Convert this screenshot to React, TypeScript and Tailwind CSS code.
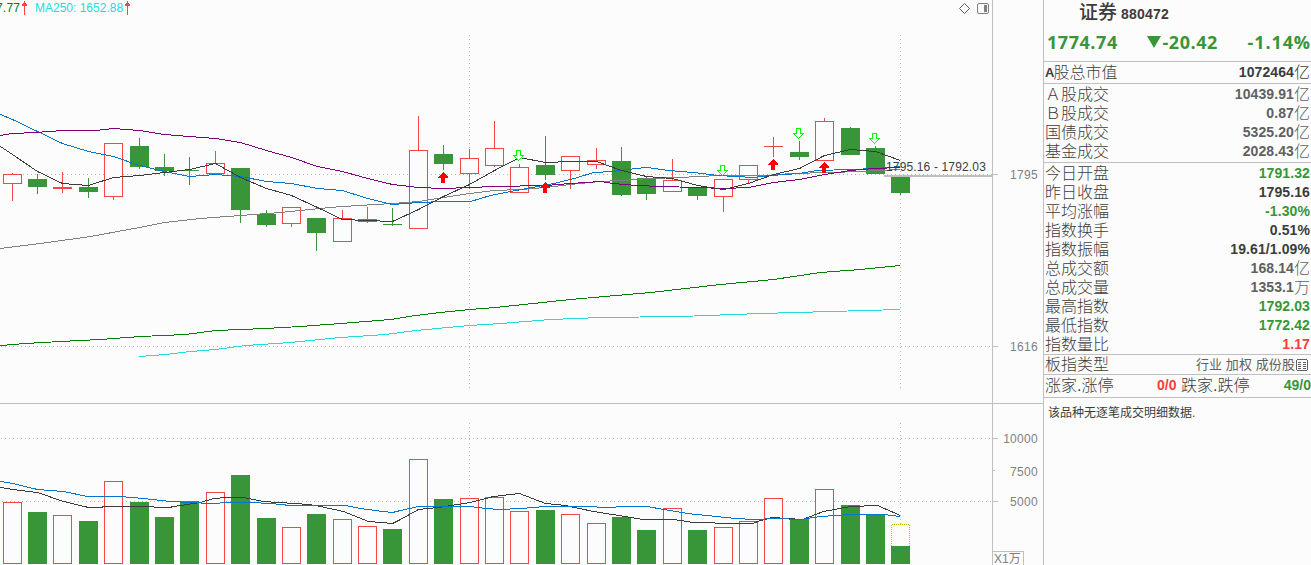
type Candle = {
  x: number;
  up: boolean;
  top: number;
  bottom: number;
  high: number;
  low: number;
  vol: number;
};

const RED = '#f84444';
const GREEN = '#389638';
const GRID = '#c0c0c0';
const BG = '#fcfcfc';

//x, up, body top, body bottom, high, low, volume top
const rows: [number, number, number, number, number, number, number][] = [
  [3, 1, 174, 184, 173, 201, 502],
  [28, 0, 179, 187, 174, 194, 512],
  [53, 1, 187, 189, 172, 193, 515],
  [79, 0, 187, 192, 178, 198, 521],
  [104, 1, 143, 197, 143, 200, 481],
  [130, 0, 146, 167, 138, 169, 502],
  [155, 0, 167, 171, 154, 176, 517],
  [180, 0, 170, 171, 157, 185, 501],
  [206, 1, 163, 174, 151, 174, 492],
  [231, 0, 168, 210, 168, 223, 475],
  [257, 0, 214, 225, 210, 227, 518],
  [282, 1, 207, 224, 207, 227, 527],
  [307, 0, 218, 233, 218, 251, 514],
  [333, 1, 218, 242, 210, 242, 519],
  [358, 1, 219, 222, 207, 223, 526],
  [383, 0, 224, 225, 208, 226, 529],
  [409, 1, 150, 229, 116, 229, 459],
  [434, 0, 154, 164, 145, 170, 499],
  [460, 1, 158, 174, 149, 189, 498],
  [485, 1, 148, 166, 121, 167, 497],
  [510, 1, 167, 193, 164, 193, 511],
  [536, 0, 165, 175, 136, 180, 510],
  [561, 1, 156, 171, 156, 189, 514],
  [587, 1, 160, 165, 148, 169, 523],
  [612, 0, 161, 195, 147, 196, 517],
  [637, 0, 178, 194, 176, 200, 530],
  [663, 1, 180, 192, 159, 192, 508],
  [688, 0, 187, 196, 187, 200, 530],
  [714, 1, 179, 197, 179, 212, 527],
  [739, 1, 165, 180, 165, 183, 521],
  [764, 1, 146, 147, 137, 157, 498],
  [790, 0, 152, 157, 141, 160, 519],
  [815, 1, 121, 161, 118, 161, 489],
  [841, 0, 128, 155, 127, 155, 505],
  [866, 0, 148, 174, 146, 174, 514],
  [891, 0, 177, 193, 177, 195, 546],
];

const candles: Candle[] = rows.map(([x, up, top, bottom, high, low, vol]) => ({
  x, up: up === 1, top, bottom, high, low, vol,
}));

const priceLines = [
  { color: '#808080', points: '0,248 40,243 90,236 139,227 164,222 200,218 240,215 280,212 330,207 342,206 392,203 418,201 443,197 469,193 494,190 520,189 545,187 570,184 600,181 620,180 650,178 680,177 697,176 720,175 770,175 790,173 830,172 860,171 880,170 900,169' },
  { color: '#0078d0', points: '0,114 12,119 37,131 62,143 88,151 113,156 139,165 164,171 189,176 215,174 240,176 266,181 291,183 317,188 342,190 367,198 392,204 418,202 443,201 470,201 490,195 510,191 537,186 558,182 577,177 593,172 612,171 635,168 647,167 668,170 693,172 717,175 735,176 753,177 770,175 799,173 817,170 850,169 875,168 900,166' },
  { color: '#800080', points: '0,135 12,133 35,132 62,130 95,130 113,128 139,130 164,134 189,136 215,138 240,142 266,150 291,157 317,166 342,171 367,178 392,184 418,187 443,188 469,187 494,186 545,185 570,183 600,181 612,183 636,185 660,186 697,187 723,188 748,187 773,182 799,179 824,174 850,170 873,168 900,167' },
  { color: '#008000', points: '0,345 25,343 60,341 100,339 140,336 185,334 215,330 265,328 300,326 340,323 390,319 415,315 440,312 469,309 495,307 570,299 650,292 720,284 773,279 820,272 860,269 900,265' },
  { color: '#20dcdc', points: '139,356 165,354 190,351 215,349 245,345 290,342 340,337 385,334 415,330 469,325 500,323 550,319 600,317 680,316 760,313 830,311 900,309' },
  { color: '#3c3c3c', points: '0,146 12,154 37,171 62,183 88,185 113,177 139,175 164,172 189,169 215,163 240,177 266,188 291,195 317,207 342,219 367,220 392,221 418,209 443,196 469,184 494,170 519,157 545,162 570,161 596,161 621,170 646,176 672,178 697,185 723,189 748,183 773,174 799,168 824,155 850,149 875,151 900,160' },
];

const volumeLines = [
  { color: '#3c3c3c', points: '0,487 12,489 37,492 63,501 88,507 101,507 103,506 152,506 155,507 168,507 180,505 200,502 213,498 227,497 243,497 263,501 309,504 320,506 343,511 368,521 392,523 400,519 418,509 438,507 470,502 493,496 519,493 545,503 565,505 593,511 612,514 643,519 673,519 693,522 735,523 752,523 760,520 772,517 802,519 823,511 850,506 877,505 900,515' },
  { color: '#0078d0', points: '0,481 12,483 37,489 63,491 87,496 120,496 143,498 170,501 190,502 210,503 230,502 250,502 270,503 290,505 345,505 360,508 382,511 392,512 400,510 418,506 470,506 485,508 500,509 520,508 545,506 580,506 612,507 620,506 647,506 663,509 687,513 735,518 753,519 777,518 800,519 820,516 850,514 883,514 900,516' },
];

const sells = [[519, 150], [723, 165], [799, 128], [875, 133]];
const buys = [[443, 172], [545, 182], [773, 159], [824, 162]];

const Dotted = ({ x1, y1, x2, y2 }: { x1: number; y1: number; x2: number; y2: number }) => (
  <line x1={x1} y1={y1} x2={x2} y2={y2} stroke="#b8b8b8" strokeDasharray="1 3" />
);

const Box = ({ x, y, bottom, up }: { x: number; y: number; bottom: number; up: boolean }) => {
  if (!up || bottom - y < 4) {
    return <rect x={x} y={y} width={19} height={bottom - y} fill={up ? RED : GREEN} />;
  }
  return <rect x={x + 0.5} y={y + 0.5} width={18} height={bottom - y - 1} fill={BG} stroke={RED} />;
};

const Lines = ({ items }: { items: { color: string; points: string }[] }) => (
  <g transform="translate(0.5 0.5)" fill="none">
    {items.map((l) => <polyline key={l.points} points={l.points} stroke={l.color} />)}
  </g>
);

const AxisLabel = ({ y, children }: { y: number; children: string }) => (
  <text x={1038} y={y} textAnchor="end" fill="#808080" className="text-[12px] tracking-[0.3px]">{children}</text>
);

const PriceChart = () => (
  <svg width={1043} height={387} viewBox="0 16 1043 387" className="block" shapeRendering="crispEdges">
    <Dotted x1={3} y1={174.5} x2={992} y2={174.5} />
    <Dotted x1={1} y1={346.5} x2={992} y2={346.5} />
    <Dotted x1={469.5} y1={35} x2={469.5} y2={389} />
    <Dotted x1={900.5} y1={35} x2={900.5} y2={389} />
    {candles.map((c) => (
      <g key={c.x}>
        <rect x={c.x + 9} y={c.high} width={1} height={c.low - c.high} fill={c.up ? RED : GREEN} />
        <Box x={c.x} y={c.top} bottom={c.bottom} up={c.up} />
      </g>
    ))}
    <Lines items={priceLines} />
    {sells.map(([x, y]) => (
      <path key={x} d="M-2 0H2V5H5L0 10L-5 5H-2Z" transform={`translate(${x - 0.5} ${y + 0.5})`} fill={BG} stroke="#00ff00" />
    ))}
    {buys.map(([x, y]) => (
      <path key={x} d="M0 0L5 5V6H2V11H-2V6H-5V5Z" transform={`translate(${x} ${y})`} fill="#ff0000" />
    ))}
    {/* gap between the last two bars */}
    <rect x={884} y={175} width={108} height={2} fill={GRID} />
    <text x={886} y={171} fill="#3c3c3c" className="text-[12px] tracking-[0.15px]">1795.16 - 1792.03</text>
    <path d="M992.5 16V403M992 174.5H998M992 346.5H998" stroke={GRID} />
    <AxisLabel y={179}>1795</AxisLabel>
    <AxisLabel y={351}>1616</AxisLabel>
  </svg>
);

const VolumeChart = () => (
  <svg width={1043} height={161} viewBox="0 404 1043 161" className="block" shapeRendering="crispEdges">
    <Dotted x1={1} y1={438.5} x2={992} y2={438.5} />
    <Dotted x1={2} y1={501.5} x2={992} y2={501.5} />
    <Dotted x1={469.5} y1={423} x2={469.5} y2={564} />
    <Dotted x1={900.5} y1={423} x2={900.5} y2={524} />
    {candles.map((c) => <Box key={c.x} x={c.x} y={c.vol} bottom={564} up={c.up} />)}
    <path d="M891.5 546V524.5H909.5V546" fill="none" stroke="#c8b400" strokeDasharray="1 1" />
    <Lines items={volumeLines} />
    <path d="M992.5 404V565M992 438.5H998M992 470.5H995M992 501.5H998M992 551.5H1023.5V565" stroke={GRID} fill="none" />
    <AxisLabel y={443}>10000</AxisLabel>
    <AxisLabel y={476}>7500</AxisLabel>
    <AxisLabel y={506}>5000</AxisLabel>
    <text x={994} y={563} fill="#808080" className="text-[12px]">X1万</text>
  </svg>
);

const RiseArrow = () => (
  <svg width={5} height={14} viewBox="0 0 5 14" shapeRendering="crispEdges" fill={RED}>
    <path d="M2 0H3V14H2ZM1 2H4V3H5V5H0V3H1Z" />
  </svg>
);

const Row = ({ label, value, unit = '', color = 'text-[#3c3c3c]' }: { label: string; value: string; unit?: string; color?: string }) => (
  <div className="flex h-[19px] items-center justify-between whitespace-nowrap pl-px pr-px">
    <span className="text-base leading-[19px] font-light">{label}</span>
    <span className={`flex items-center text-sm leading-[19px] font-bold tracking-[0.1px] ${color}`}>
      {value}
      {unit && <span className="text-base leading-[19px] font-light tracking-normal">{unit}</span>}
    </span>
  </div>
);

const GREY = 'text-[#606060]';
const DOWN = 'text-[#389638]';
const UP = 'text-[#f83c3c]';

const QuotePanel = () => (
  <aside className="h-full w-[268px] shrink-0 border-l border-[#c0c0c0] text-[#3c3c3c]">
    <div className="flex h-[62px] flex-col border-b border-[#c0c0c0]">
      <div className="flex h-6 items-baseline pt-px pl-[35px] leading-6">
        <span className="text-[19px] leading-6 font-medium">证券</span>
        <span className="ml-1 text-sm font-bold tracking-[0.2px]">880472</span>
      </div>
      <div className="flex h-9 items-center justify-between pl-[3px] pr-px font-['Open_Sans'] text-[18px] font-bold tracking-[0.55px] text-[#389638]">
        <span>1774.74</span>
        <span className="flex items-center">
          <svg width={14} height={12} viewBox="0 0 14 12" className="mr-px" fill={GREEN}><path d="M0 0H14L7 12Z" /></svg>
          -20.42
        </span>
        <span className="tracking-[0.9px] mr-[-1px]">-1.14%</span>
      </div>
    </div>
    <div className="h-[22px] border-b border-[#c0c0c0] pt-px">
      <div className="flex h-[19px] items-center justify-between pl-px pr-px leading-[19px]">
        <span className="flex text-base leading-[19px] font-light"><b className="mr-[-1px] text-[13px] font-bold">A</b>股总市值</span>
        <span className="flex items-center text-sm leading-[19px] font-bold tracking-[0.1px]">1072464<span className="text-base leading-[19px] font-light tracking-normal">亿</span></span>
      </div>
    </div>
    <div className="h-[79px] border-b border-[#c0c0c0] pt-px">
      <Row label="Ａ股成交" value="10439.91" unit="亿" color={GREY} />
      <Row label="Ｂ股成交" value="0.87" unit="亿" color={GREY} />
      <Row label="国债成交" value="5325.20" unit="亿" color={GREY} />
      <Row label="基金成交" value="2028.43" unit="亿" color={GREY} />
    </div>
    <div className="h-[192px] border-b border-[#c0c0c0] pt-px">
      <Row label="今日开盘" value="1791.32" color={DOWN} />
      <Row label="昨日收盘" value="1795.16" />
      <Row label="平均涨幅" value="-1.30%" color={DOWN} />
      <Row label="指数换手" value="0.51%" />
      <Row label="指数振幅" value="19.61/1.09%" />
      <Row label="总成交额" value="168.14" unit="亿" color={GREY} />
      <Row label="总成交量" value="1353.1" unit="万" color={GREY} />
      <Row label="最高指数" value="1792.03" color={DOWN} />
      <Row label="最低指数" value="1772.42" color={DOWN} />
      <Row label="指数量比" value="1.17" color={UP} />
    </div>
    <div className="flex h-5 items-center justify-between border-b border-[#c0c0c0] pl-px pr-[3px]">
      <span className="text-base leading-[19px] font-light">板指类型</span>
      <span className="flex items-center text-[13px] leading-[19px] tracking-[0.1px] text-[#606060]">
        行业 加权 成份股
        <svg width={12} height={12} viewBox="0 0 12 12" className="ml-px" fill="none" stroke="#606060" shapeRendering="crispEdges">
          <path d="M1 .5H11M.5 1V11M11.5 1V11M1 11.5H11M2 3.5H5M2 5.5H5M2 7.5H5M2 9.5H5M7 3.5H10M7 5.5H10M7 7.5H10M7 9.5H10" />
        </svg>
      </span>
    </div>
    <div className="flex h-[23px] items-center border-b border-[#c0c0c0] pb-[2px] pl-px text-base leading-[19px] font-light whitespace-nowrap">
      <span className="w-[112px]">涨家.涨停</span>
      <span className="w-6 text-sm font-bold text-[#f83c3c]">0/0</span>
      <span>跌家.跌停</span>
      <span className="ml-auto text-sm font-bold text-[#389638]">49/0</span>
    </div>
    <p className="pt-[6px] pl-1 text-xs leading-[18px]">该品种无逐笔成交明细数据.</p>
  </aside>
);

const App = () => {
  return (
    <div className="flex h-[565px] w-[1311px] overflow-hidden bg-[#fcfcfc] font-['Liberation_Sans','Noto_Sans_CJK_SC',sans-serif]">
      <main className="w-[1043px] shrink-0">
        <div className="flex h-4 w-[993px] items-start justify-between border-r border-[#c0c0c0] pr-[3px] text-xs leading-4">
          <div className="flex">
            <span className="ml-[-4px] w-[26px] text-[#008000] tracking-[0.2px]">7.77</span>
            <span className="mt-px"><RiseArrow /></span>
            <span className="ml-2 w-[90px] text-[#20dcdc]">MA250: 1652.88</span>
            <span className="mt-px"><RiseArrow /></span>
          </div>
          <div className="flex gap-[7px] pt-[3px]">
            <svg width={11} height={11} viewBox="0 0 11 11" fill="none" stroke="#606060"><path d="M5.5 .5L10.5 5.5L5.5 10.5L.5 5.5Z" /></svg>
            <svg width={12} height={11} viewBox="0 0 12 11" fill="none" stroke="#808080"><rect x=".5" y=".5" width="11" height="10" rx="1.5" /><path d="M7 2H10V9H7Z" fill="#808080" stroke="none" /></svg>
          </div>
        </div>
        <PriceChart />
        <div className="border-t border-[#c0c0c0]">
          <VolumeChart />
        </div>
      </main>
      <QuotePanel />
    </div>
  );
};

export default App;
